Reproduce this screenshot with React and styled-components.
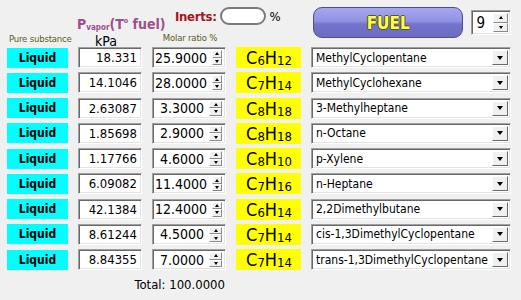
import React from 'react';
import styled, { createGlobalStyle } from 'styled-components';

const GlobalStyle = createGlobalStyle`
  html, body {
    margin: 0;
    padding: 0;
    background: #f0f0f0;
  }
  body {
    font-family: "DejaVu Sans Condensed", "DejaVu Sans", sans-serif;
    font-size: 13px;
    color: #000;
  }
`;

const rows = [
  { p: '18.331', x: '25.9000', c: '6', h: '12', name: 'MethylCyclopentane' },
  { p: '14.1046', x: '28.0000', c: '7', h: '14', name: 'MethylCyclohexane' },
  { p: '2.63087', x: '3.3000', c: '8', h: '18', name: '3-Methylheptane' },
  { p: '1.85698', x: '2.9000', c: '8', h: '18', name: 'n-Octane' },
  { p: '1.17766', x: '4.6000', c: '8', h: '10', name: 'p-Xylene' },
  { p: '6.09082', x: '11.4000', c: '7', h: '16', name: 'n-Heptane' },
  { p: '42.1384', x: '12.4000', c: '6', h: '14', name: '2,2Dimethylbutane' },
  { p: '8.61244', x: '4.5000', c: '7', h: '14', name: 'cis-1,3DimethylCyclopentane' },
  { p: '8.84355', x: '7.0000', c: '7', h: '14', name: 'trans-1,3DimethylCyclopentane' },
];

const Page = styled.div`
  width: 521px;
  height: 300px;
  padding-left: 7px;
  box-sizing: border-box;
  overflow: hidden;
`;

const Grid = styled.div`
  display: grid;
  grid-template-columns: 61px 64px 74px 65px 200px;
  column-gap: 10px;
`;

const Header = styled(Grid)`
  grid-template-rows: 31px 15px;
  height: 46px;
`;

const Table = styled(Grid)`
  margin-top: 1px;
  grid-auto-rows: 21px;
  row-gap: 4.25px;
`;

const SmallLabel = styled.div`
  grid-column: ${(p) => p.$col};
  grid-row: 2;
  align-self: center;
  text-align: center;
  font-size: 9.5px;
  letter-spacing: -0.2px;
  color: #5c5a22;
  white-space: nowrap;
  margin-top: ${(p) => p.$dy || 0}px;
  padding-left: ${(p) => p.$dx || 0}px;
`;

const Unit = styled.div`
  grid-column: 2;
  grid-row: 2;
  align-self: center;
  text-align: center;
  padding-right: 8px;
  font-size: 14px;
  margin-top: 4px;
`;

const Vapor = styled.div`
  grid-column: 2 / 4;
  grid-row: 1;
  align-self: end;
  margin-left: -1px;
  margin-bottom: -1px;
  font-weight: bold;
  font-size: 14px;
  color: #9e4f8c;
  white-space: nowrap;

  sub {
    font-size: 8px;
    position: relative;
    top: 1px;
    vertical-align: baseline;
  }
  sup {
    font-size: 7px;
    vertical-align: 6px;
  }
`;

const Inerts = styled.div`
  grid-column: 3 / 5;
  grid-row: 1;
  display: flex;
  align-items: center;
  padding-left: 23px;
  padding-top: 6px;
  height: 20px;
`;

const InertsLabel = styled.span`
  font-weight: bold;
  font-size: 13px;
  letter-spacing: -0.3px;
  color: #a3141c;
  margin-right: 3px;
`;

const Pill = styled.div`
  width: 42px;
  height: 14px;
  border: 2px solid #7a7a7a;
  border-radius: 9px;
  background: #fff;
  margin-right: 4px;
`;

const Percent = styled.span`
  font-size: 13px;
`;

const RightGroup = styled.div`
  grid-column: 5;
  grid-row: 1 / 3;
  display: flex;
  align-items: flex-start;
  gap: 8px;
  padding-left: 2px;
`;

const FuelButton = styled.div`
  margin-top: 7px;
  width: 150px;
  height: 29px;
  border: 1px solid #4d4d96;
  border-radius: 9px;
  background: linear-gradient(
    to bottom,
    #a6a6f0 0%,
    #9292e4 45%,
    #7474cc 55%,
    #6b6bc2 100%
  );
  display: flex;
  align-items: center;
  justify-content: center;
  font-weight: bold;
  font-size: 17px;
  color: #ffff4a;
  text-shadow: -1px 0 #56561e, 1px 0 #56561e, 0 -1px #56561e, 0 1px #56561e;
`;

const sunken = `
  box-sizing: border-box;
  background: #fff;
  border: 1px solid;
  border-color: #a0a0a0 #ffffff #ffffff #a0a0a0;
  box-shadow: inset 1px 1px 0 #696969, inset -1px -1px 0 #e3e3e3;
`;

const Counter = styled.div`
  ${sunken}
  margin-top: 10px;
  width: 40px;
  height: 25px;
  display: flex;
  align-items: stretch;
  padding: 2px;
  font-size: 15px;
`;

const CounterValue = styled.div`
  flex: 1;
  display: flex;
  align-items: center;
  padding-left: 2px;
`;

const SpinCol = styled.div`
  width: 15px;
  display: flex;
  flex-direction: column;
`;

const SpinBtn = styled.div`
  flex: 1;
  box-sizing: border-box;
  background: #f0f0f0;
  border: 1px solid;
  border-color: #ffffff #8a8a8a #8a8a8a #ffffff;
  display: flex;
  align-items: center;
  justify-content: center;

  &::after {
    content: '';
    border-left: 2.5px solid transparent;
    border-right: 2.5px solid transparent;
    ${(p) => (p.$down ? 'border-top: 3px solid #000;' : 'border-bottom: 3px solid #000;')}
  }
`;

const State = styled.div`
  background: #00ffff;
  height: 20px;
  align-self: center;
  display: flex;
  align-items: center;
  justify-content: center;
  font-weight: bold;
  font-size: 12px;
`;

const Field = styled.div`
  ${sunken}
  display: flex;
  align-items: center;
  justify-content: flex-end;
  padding-right: 4px;
  font-size: 13px;
`;

const SpinField = styled.div`
  ${sunken}
  display: flex;
  align-items: stretch;
  padding: 2px;
  font-size: 14px;
`;

const SpinValue = styled.div`
  flex: 1;
  display: flex;
  align-items: center;
  justify-content: flex-end;
  padding-right: 5px;
`;

const SmallSpinCol = styled(SpinCol)`
  width: 13px;
  margin-right: 1px;
`;

const Formula = styled.div`
  background: #ffff00;
  display: flex;
  align-items: center;
  justify-content: center;
  font-size: 18px;
  padding-left: 1px;

  sub {
    font-size: 13px;
    position: relative;
    top: 3px;
    vertical-align: baseline;
  }
`;

const Combo = styled.div`
  ${sunken}
  display: flex;
  align-items: stretch;
  padding: 2px;
  font-size: 12px;
`;

const ComboText = styled.div`
  flex: 1;
  display: flex;
  align-items: center;
  padding-left: 2px;
  white-space: nowrap;
  overflow: hidden;
`;

const ComboArrow = styled.div`
  width: 16px;
  box-sizing: border-box;
  background: #f0f0f0;
  border: 1px solid;
  border-color: #ffffff #696969 #696969 #ffffff;
  display: flex;
  align-items: center;
  justify-content: center;

  &::after {
    content: '';
    border-left: 3.5px solid transparent;
    border-right: 3.5px solid transparent;
    border-top: 4px solid #000;
  }
`;

const Total = styled.div`
  grid-column: 2 / 4;
  text-align: right;
  font-size: 13px;
  align-self: center;
  margin-top: -1px;
  padding-right: 1px;
`;

export default function App() {
  return (
    <Page>
      <GlobalStyle />
      <Header>
        <Vapor>
          P<sub>vapor</sub>(T<sup>o</sup> fuel)
        </Vapor>
        <Inerts>
          <InertsLabel>Inerts:</InertsLabel>
          <Pill />
          <Percent>%</Percent>
        </Inerts>
        <RightGroup>
          <FuelButton>FUEL</FuelButton>
          <Counter>
            <CounterValue>9</CounterValue>
            <SpinCol>
              <SpinBtn />
              <SpinBtn $down />
            </SpinCol>
          </Counter>
        </RightGroup>
        <SmallLabel $col={1} $dx={2}>Pure substance</SmallLabel>
        <Unit>kPa</Unit>
        <SmallLabel $col={3} $dy={-2} $dx={2}>Molar ratio %</SmallLabel>
      </Header>
      <Table>
        {rows.map((r) => (
          <React.Fragment key={r.name}>
            <State>Liquid</State>
            <Field>{r.p}</Field>
            <SpinField>
              <SpinValue>{r.x}</SpinValue>
              <SmallSpinCol>
                <SpinBtn />
                <SpinBtn $down />
              </SmallSpinCol>
            </SpinField>
            <Formula>
              C<sub>{r.c}</sub>H<sub>{r.h}</sub>
            </Formula>
            <Combo>
              <ComboText>{r.name}</ComboText>
              <ComboArrow />
            </Combo>
          </React.Fragment>
        ))}
        <Total>Total: 100.0000</Total>
      </Table>
    </Page>
  );
}
